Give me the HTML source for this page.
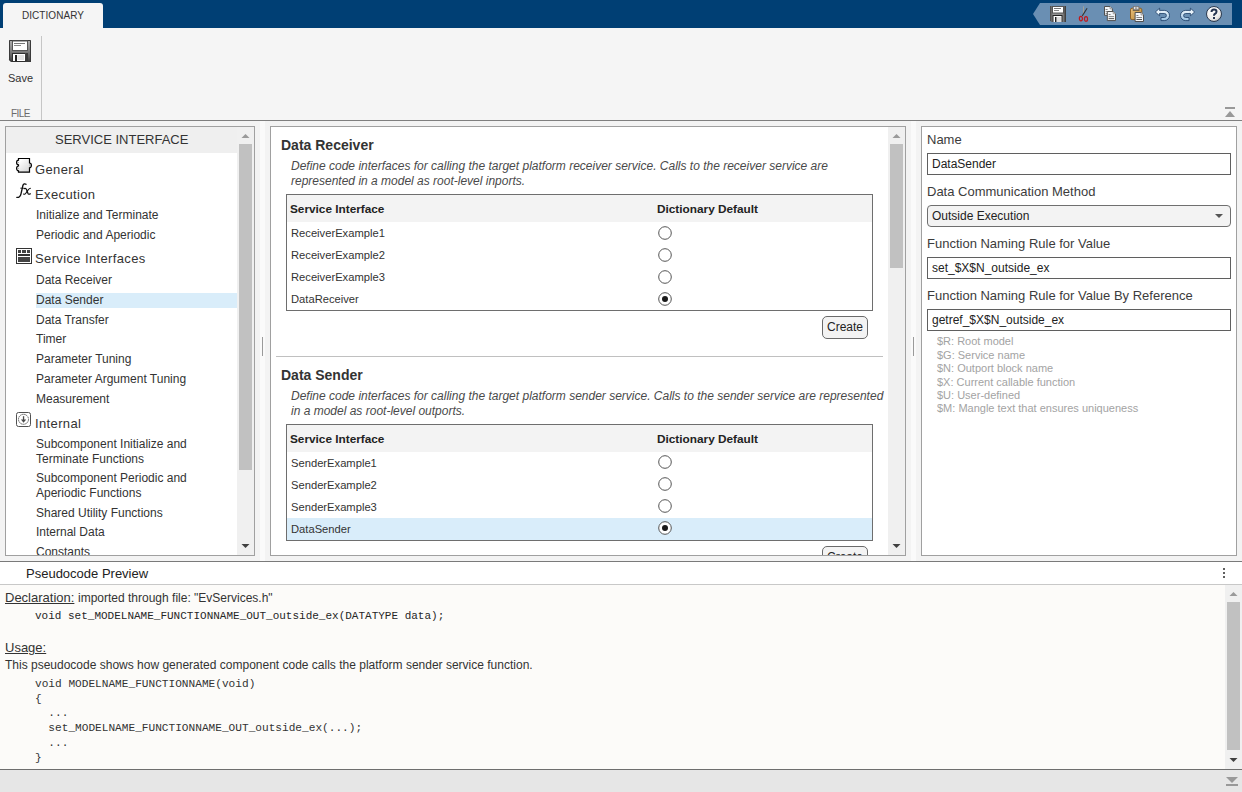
<!DOCTYPE html>
<html><head><meta charset="utf-8">
<style>
*{box-sizing:border-box;margin:0;padding:0}
html,body{width:1242px;height:792px;overflow:hidden;background:#f3f3f3;font-family:"Liberation Sans",sans-serif;color:#333}
.t{position:absolute;white-space:pre}
.r{position:absolute}
svg{position:absolute;overflow:visible}
</style></head><body>
<div class="r" style="left:0px;top:0px;width:1242px;height:28px;background:#003f74;"></div>
<div class="r" style="left:3px;top:3px;width:100px;height:25px;background:#f5f5f5;border-radius:3px 3px 0 0"></div>
<div class="t" style="left:22px;top:11px;font-size:10px;line-height:10px;color:#333;font-weight:normal;font-style:normal;font-family:'Liberation Sans';letter-spacing:0.05px">DICTIONARY</div>
<svg style="left:0;top:0" width="1242" height="28"><polygon points="1033,14 1040,3 1232,3 1232,25 1040,25" fill="#6a8fb3"/></svg>
<div class="r" style="left:0px;top:28px;width:1242px;height:92px;background:#f5f5f5;"></div>
<div class="r" style="left:0px;top:120px;width:1242px;height:1px;background:#7f7f7f;"></div>
<div class="r" style="left:41px;top:36px;width:1px;height:84px;background:#c6c6c6;"></div>
<div class="t" style="left:8px;top:73px;font-size:11px;line-height:11px;color:#333;font-weight:normal;font-style:normal;font-family:'Liberation Sans';">Save</div>
<div class="t" style="left:11px;top:109px;font-size:10px;line-height:10px;color:#6a6a6a;font-weight:normal;font-style:normal;font-family:'Liberation Sans';letter-spacing:-0.55px">FILE</div>
<svg style="left:9px;top:40px" width="22" height="22" viewBox="0 0 22 22">
<defs><linearGradient id="fg" x1="0" y1="0" x2="0" y2="1"><stop offset="0" stop-color="#b0b0b0"/><stop offset="0.5" stop-color="#808080"/><stop offset="1" stop-color="#3c3c3c"/></linearGradient></defs>
<path d="M0,0 H22 V22 H2 L0,20 Z" fill="url(#fg)"/>
<path d="M0.5,0.5 H21.5 V21.5 H2.2 L0.5,19.8 Z" fill="none" stroke="#3a3a3a" stroke-width="1"/>
<rect x="3.5" y="1" width="15" height="9.5" fill="#fff" stroke="#555" stroke-width="1"/>
<rect x="5" y="3" width="11" height="1" fill="#777"/>
<rect x="5" y="5" width="7" height="1" fill="#888"/>
<rect x="3" y="13" width="13.5" height="9" fill="#2f2f2f"/>
<rect x="4" y="14" width="12" height="7" fill="#fff"/>
<rect x="6" y="15" width="2" height="6" fill="#222"/>
<rect x="8.5" y="15" width="6.5" height="5" fill="#e2e2e2"/>
<rect x="16.5" y="13" width="2.5" height="8.5" fill="#3a3a3a"/>
</svg>
<div class="r" style="left:1225px;top:107px;width:10px;height:2px;background:#999;"></div>
<svg style="left:0;top:0" width="1242" height="130"><polygon points="1225,117 1230,111 1235,117" fill="#999"/></svg>
<svg style="left:1050px;top:6px" width="16" height="16" viewBox="0 0 16 16">
<defs><linearGradient id="qg" x1="0" y1="0" x2="1" y2="0"><stop offset="0" stop-color="#444"/><stop offset="0.2" stop-color="#999"/><stop offset="0.8" stop-color="#888"/><stop offset="1" stop-color="#333"/></linearGradient></defs>
<path d="M0,0 H16 V16 H1.5 L0,14.5 Z" fill="url(#qg)"/>
<rect x="2.5" y="0.5" width="11" height="6.5" fill="#fff" stroke="#555" stroke-width="1"/>
<rect x="4" y="2" width="7" height="1" fill="#777"/><rect x="4" y="4" width="5" height="1" fill="#888"/>
<rect x="2.5" y="9" width="10" height="7" fill="#222"/>
<rect x="3.5" y="10" width="8" height="6" fill="#fff"/>
<rect x="5" y="11" width="1.5" height="5" fill="#222"/>
<rect x="7" y="11" width="4" height="5" fill="#ddd"/>
</svg>
<svg style="left:1078px;top:6px" width="12" height="17" viewBox="0 0 12 17">
<path d="M5.5,0.3 V8.6 L4.6,10" fill="none" stroke="#a8a293" stroke-width="0.9"/>
<line x1="9.1" y1="2.2" x2="4.3" y2="9.9" stroke="#333" stroke-width="1.1"/>
<ellipse cx="2.9" cy="12.6" rx="1.55" ry="2.25" fill="none" stroke="#c0181c" stroke-width="1.2"/>
<ellipse cx="8" cy="12.9" rx="1.55" ry="2.35" fill="none" stroke="#c0181c" stroke-width="1.2"/>
</svg>
<svg style="left:1104px;top:6px" width="13" height="16" viewBox="0 0 13 16">
<path d="M0.5,0.5 H6 L8.4,2.9 V9.3 H0.5 Z" fill="#f4f6f8" stroke="#505050" stroke-width="1"/>
<path d="M6,0.5 V2.9 H8.4" fill="#ddd" stroke="#777" stroke-width="0.6"/>
<rect x="1.6" y="3" width="2" height="0.9" fill="#777"/><rect x="1.6" y="5" width="5" height="0.9" fill="#888"/><rect x="1.6" y="7" width="5" height="0.9" fill="#888"/>
<path d="M3.3,5.5 H9.2 L11.5,7.8 V14.6 H3.3 Z" fill="#f4f6f8" stroke="#505050" stroke-width="1"/>
<path d="M9.2,5.5 V7.8 H11.5" fill="#ddd" stroke="#777" stroke-width="0.6"/>
<rect x="4.6" y="8.1" width="2" height="0.9" fill="#777"/><rect x="4.6" y="10.2" width="5.5" height="0.9" fill="#777"/><rect x="4.6" y="12.2" width="5.5" height="0.9" fill="#444"/>
</svg>
<svg style="left:1130px;top:6px" width="15" height="16" viewBox="0 0 15 16">
<defs><linearGradient id="pg" x1="0" y1="0" x2="1" y2="1"><stop offset="0" stop-color="#e9c27e"/><stop offset="1" stop-color="#b98536"/></linearGradient></defs>
<rect x="0.5" y="2.2" width="11.3" height="11.4" rx="1.6" fill="url(#pg)" stroke="#8a5a1c" stroke-width="0.9"/>
<rect x="2.8" y="3.4" width="6.6" height="1.2" fill="#333"/>
<rect x="3.4" y="0.5" width="5.4" height="3.2" fill="#ececec" stroke="#777" stroke-width="0.8"/>
<rect x="4.9" y="1.6" width="2.4" height="0.9" fill="#555"/>
<path d="M5.1,6.5 H11 L13.5,9 V15.5 H5.1 Z" fill="#f4f6f8" stroke="#505050" stroke-width="1"/>
<path d="M11,6.5 V9 H13.5" fill="#ddd" stroke="#777" stroke-width="0.6"/>
<rect x="6.4" y="9.1" width="2" height="0.9" fill="#777"/><rect x="6.4" y="11.1" width="5.6" height="0.9" fill="#777"/><rect x="6.4" y="13.1" width="5.6" height="0.9" fill="#444"/>
</svg>
<svg style="left:1155px;top:8px" width="15" height="13" viewBox="0 0 15 13"><defs><linearGradient id="ug" x1="0" y1="0" x2="0" y2="1"><stop offset="0" stop-color="#eef6fc"/><stop offset="1" stop-color="#98c0e2"/></linearGradient></defs>
<path d="M4,2.4 H9.4 A5.1,5.1 0 0 1 9.4,12.6 H6 V9.5 H9.4 A2,2 0 0 0 9.4,5.5 H4 Z" fill="url(#ug)" stroke="#1d3d66" stroke-width="0.8" stroke-linejoin="round"/>
<polygon points="0.4,4 4.6,0.2 4.6,7.8" fill="#e8f3fb" stroke="#1d3d66" stroke-width="0.8" stroke-linejoin="round"/>
<rect x="4" y="2.8" width="1.2" height="2.3" fill="#e8f3fb"/></svg>
<svg style="left:1180px;top:8px" width="15" height="13" viewBox="0 0 15 13"><g transform="translate(15,0) scale(-1,1)"><defs><linearGradient id="ug2" x1="0" y1="0" x2="0" y2="1"><stop offset="0" stop-color="#eef6fc"/><stop offset="1" stop-color="#98c0e2"/></linearGradient></defs>
<path d="M4,2.4 H9.4 A5.1,5.1 0 0 1 9.4,12.6 H6 V9.5 H9.4 A2,2 0 0 0 9.4,5.5 H4 Z" fill="url(#ug2)" stroke="#1d3d66" stroke-width="0.8" stroke-linejoin="round"/>
<polygon points="0.4,4 4.6,0.2 4.6,7.8" fill="#e8f3fb" stroke="#1d3d66" stroke-width="0.8" stroke-linejoin="round"/>
<rect x="4" y="2.8" width="1.2" height="2.3" fill="#e8f3fb"/></g></svg>
<svg style="left:1206px;top:6px" width="16" height="16" viewBox="0 0 16 16">
<defs><radialGradient id="hg" cx="0.4" cy="0.3" r="0.8"><stop offset="0" stop-color="#fff"/><stop offset="0.7" stop-color="#e8e8e8"/><stop offset="1" stop-color="#999"/></radialGradient></defs>
<circle cx="8" cy="8" r="7.5" fill="url(#hg)" stroke="#2a3a50" stroke-width="1"/>
<path d="M5.5,6 Q5.5,3.5 8,3.5 Q10.5,3.5 10.5,5.8 Q10.5,7.2 8.8,8 Q8,8.4 8,9.8" fill="none" stroke="#233350" stroke-width="2"/>
<rect x="7" y="11" width="2" height="2" fill="#233350"/>
</svg>
<div class="r" style="left:5px;top:126px;width:250px;height:430px;background:#fff;border:1px solid #a0a0a0"></div>
<div class="r" style="left:270px;top:126px;width:636px;height:430px;background:#fff;border:1px solid #a0a0a0"></div>
<div class="r" style="left:921px;top:126px;width:316px;height:430px;background:#fff;border:1px solid #a0a0a0"></div>
<div class="r" style="left:260px;top:121px;width:5px;height:440px;background:#fafafa;"></div>
<div class="r" style="left:911px;top:121px;width:5px;height:440px;background:#fafafa;"></div>
<div class="r" style="left:262px;top:337px;width:1px;height:19px;background:#9a9a9a;"></div>
<div class="r" style="left:913px;top:337px;width:1px;height:19px;background:#9a9a9a;"></div>
<div class="r" style="left:6px;top:127px;width:231px;height:26px;background:#efefef;"></div>
<div class="r" style="left:237px;top:127px;width:17px;height:428px;background:#f0f0f0;"></div>
<div class="r" style="left:239px;top:144px;width:13px;height:326px;background:#c1c1c1;"></div>
<svg style="left:0;top:0" width="1242" height="792"><polygon points="241.5,138 245.5,134 249.5,138" fill="#9a9a9a"/><polygon points="241.5,544 245.5,548 249.5,544" fill="#404040"/></svg>
<div class="t" style="left:55px;top:133px;font-size:13px;line-height:13px;color:#333;font-weight:normal;font-style:normal;font-family:'Liberation Sans';">SERVICE INTERFACE</div>
<div class="r" style="left:36px;top:293px;width:201px;height:15px;background:#d9edfa;"></div>
<div class="t" style="left:35px;top:163px;font-size:13px;line-height:13px;color:#333;font-weight:normal;font-style:normal;font-family:'Liberation Sans';letter-spacing:0.37px">General</div>
<div class="t" style="left:35px;top:188px;font-size:13px;line-height:13px;color:#333;font-weight:normal;font-style:normal;font-family:'Liberation Sans';letter-spacing:0.37px">Execution</div>
<div class="t" style="left:36px;top:209px;font-size:12px;line-height:12px;color:#333;font-weight:normal;font-style:normal;font-family:'Liberation Sans';">Initialize and Terminate</div>
<div class="t" style="left:36px;top:229px;font-size:12px;line-height:12px;color:#333;font-weight:normal;font-style:normal;font-family:'Liberation Sans';">Periodic and Aperiodic</div>
<div class="t" style="left:35px;top:252px;font-size:13px;line-height:13px;color:#333;font-weight:normal;font-style:normal;font-family:'Liberation Sans';letter-spacing:0.37px">Service Interfaces</div>
<div class="t" style="left:36px;top:274px;font-size:12px;line-height:12px;color:#333;font-weight:normal;font-style:normal;font-family:'Liberation Sans';">Data Receiver</div>
<div class="t" style="left:36px;top:294px;font-size:12px;line-height:12px;color:#333;font-weight:normal;font-style:normal;font-family:'Liberation Sans';">Data Sender</div>
<div class="t" style="left:36px;top:314px;font-size:12px;line-height:12px;color:#333;font-weight:normal;font-style:normal;font-family:'Liberation Sans';">Data Transfer</div>
<div class="t" style="left:36px;top:333px;font-size:12px;line-height:12px;color:#333;font-weight:normal;font-style:normal;font-family:'Liberation Sans';">Timer</div>
<div class="t" style="left:36px;top:353px;font-size:12px;line-height:12px;color:#333;font-weight:normal;font-style:normal;font-family:'Liberation Sans';">Parameter Tuning</div>
<div class="t" style="left:36px;top:373px;font-size:12px;line-height:12px;color:#333;font-weight:normal;font-style:normal;font-family:'Liberation Sans';">Parameter Argument Tuning</div>
<div class="t" style="left:36px;top:393px;font-size:12px;line-height:12px;color:#333;font-weight:normal;font-style:normal;font-family:'Liberation Sans';">Measurement</div>
<div class="t" style="left:35px;top:417px;font-size:13px;line-height:13px;color:#333;font-weight:normal;font-style:normal;font-family:'Liberation Sans';letter-spacing:0.37px">Internal</div>
<div class="t" style="left:36px;top:438px;font-size:12px;line-height:12px;color:#333;font-weight:normal;font-style:normal;font-family:'Liberation Sans';">Subcomponent Initialize and</div>
<div class="t" style="left:36px;top:453px;font-size:12px;line-height:12px;color:#333;font-weight:normal;font-style:normal;font-family:'Liberation Sans';">Terminate Functions</div>
<div class="t" style="left:36px;top:472px;font-size:12px;line-height:12px;color:#333;font-weight:normal;font-style:normal;font-family:'Liberation Sans';">Subcomponent Periodic and</div>
<div class="t" style="left:36px;top:487px;font-size:12px;line-height:12px;color:#333;font-weight:normal;font-style:normal;font-family:'Liberation Sans';">Aperiodic Functions</div>
<div class="t" style="left:36px;top:507px;font-size:12px;line-height:12px;color:#333;font-weight:normal;font-style:normal;font-family:'Liberation Sans';">Shared Utility Functions</div>
<div class="t" style="left:36px;top:526px;font-size:12px;line-height:12px;color:#333;font-weight:normal;font-style:normal;font-family:'Liberation Sans';">Internal Data</div>
<div class="r" style="left:6px;top:540px;width:231px;height:15px;overflow:hidden"><div class="t" style="left:30px;top:6px;font-size:12px;line-height:12px;color:#333;font-weight:normal;font-style:normal;font-family:'Liberation Sans';">Constants</div>
</div>
<svg style="left:14px;top:155px" width="20" height="20" viewBox="0 0 20 20">
<defs><linearGradient id="gg" x1="0" y1="0" x2="1" y2="1"><stop offset="0.2" stop-color="#fff"/><stop offset="1" stop-color="#d0d0d0"/></linearGradient></defs>
<path d="M4.5,3.5 H15.5 V8 A1.9,2.4 0 0 1 15.5,12.8 V17.2 H4.5 V15.8 A1.9,2.4 0 0 1 4.5,11 V9.9 A1.9,2.4 0 0 1 4.5,5.1 Z" fill="url(#gg)" stroke="#000" stroke-width="1.2"/>
<path d="M3.5,6.9 L4.6,7.5 L3.5,8.1 M3.5,12.8 L4.6,13.4 L3.5,14 M15.4,9.8 L16.5,10.4 L15.4,11" fill="none" stroke="#888" stroke-width="0.7"/>
</svg>
<svg style="left:14px;top:180px" width="20" height="20" viewBox="0 0 20 20">
<path d="M12,4.3 C11,3.4 9.4,3.7 8.8,5.8 L7,13.8 C6.4,16.6 5,17.6 2.8,17.4" fill="none" stroke="#111" stroke-width="1.35" stroke-linecap="round"/>
<path d="M6.3,8.2 H9.8" fill="none" stroke="#111" stroke-width="0.9"/>
<path d="M10.2,8.6 Q11.8,7.6 12.8,10.3 L13.9,13.2 Q14.6,14.9 16.4,13.8" fill="none" stroke="#111" stroke-width="1.25" stroke-linecap="round"/>
<path d="M16.4,8.2 Q15.2,8.3 13.6,10.6 L12,13 Q10.8,14.8 9.6,14" fill="none" stroke="#111" stroke-width="1.1" stroke-linecap="round"/>
</svg>
<svg style="left:16px;top:248px" width="16" height="16" viewBox="0 0 16 16">
<rect x="0.5" y="0.5" width="15" height="15" fill="#fff" stroke="#333" stroke-width="1"/>
<rect x="2" y="2" width="3" height="3" fill="#444"/><rect x="6" y="2" width="4" height="3" fill="#444"/><rect x="11" y="2" width="3" height="3" fill="#444"/>
<rect x="2" y="6" width="12" height="2" fill="#333"/>
<rect x="2" y="9" width="12" height="5" fill="#444"/>
</svg>
<svg style="left:16px;top:412px" width="15" height="15" viewBox="0 0 15 15">
<rect x="0.5" y="0.5" width="14" height="14" rx="2" fill="#fff" stroke="#505050" stroke-width="1"/>
<circle cx="7.5" cy="7.3" r="5" fill="none" stroke="#5a5a5a" stroke-width="0.95" stroke-dasharray="1.6 0.55"/>
<rect x="6.9" y="4.2" width="1.3" height="4" fill="#4a4a4a"/>
<polygon points="4.9,7.4 10.2,7.4 7.55,10.8" fill="#4a4a4a"/>
</svg>
<div class="r" style="left:888px;top:127px;width:17px;height:428px;background:#f0f0f0;"></div>
<div class="r" style="left:890px;top:144px;width:13px;height:124px;background:#c1c1c1;"></div>
<svg style="left:0;top:0" width="1242" height="792"><polygon points="892.5,138 896.5,134 900.5,138" fill="#9a9a9a"/><polygon points="892.5,544 896.5,548 900.5,544" fill="#404040"/></svg>
<div class="t" style="left:281px;top:138px;font-size:14px;line-height:14px;color:#333;font-weight:bold;font-style:normal;font-family:'Liberation Sans';">Data Receiver</div>
<div class="t" style="left:291px;top:160px;font-size:12px;line-height:12px;color:#4a4a4a;font-weight:normal;font-style:italic;font-family:'Liberation Sans';">Define code interfaces for calling the target platform receiver service. Calls to the receiver service are</div>
<div class="t" style="left:291px;top:175px;font-size:12px;line-height:12px;color:#4a4a4a;font-weight:normal;font-style:italic;font-family:'Liberation Sans';">represented in a model as root-level inports.</div>
<div class="r" style="left:286px;top:194px;width:587px;height:117px;background:#fff;border:1px solid #6e6e6e"></div>
<div class="r" style="left:287px;top:195px;width:585px;height:27px;background:#f3f3f3;"></div>
<div class="t" style="left:290px;top:204px;font-size:11.8px;line-height:11.8px;color:#222;font-weight:bold;font-style:normal;font-family:'Liberation Sans';">Service Interface</div>
<div class="t" style="left:657px;top:204px;font-size:11.8px;line-height:11.8px;color:#222;font-weight:bold;font-style:normal;font-family:'Liberation Sans';">Dictionary Default</div>
<div class="t" style="left:291px;top:228px;font-size:11.2px;line-height:11.2px;color:#333;font-weight:normal;font-style:normal;font-family:'Liberation Sans';">ReceiverExample1</div>
<svg style="left:658px;top:226px" width="14" height="14" viewBox="0 0 14 14"><circle cx="7" cy="7" r="6.3" fill="#fff" stroke="#555" stroke-width="1"/></svg>
<div class="t" style="left:291px;top:250px;font-size:11.2px;line-height:11.2px;color:#333;font-weight:normal;font-style:normal;font-family:'Liberation Sans';">ReceiverExample2</div>
<svg style="left:658px;top:248px" width="14" height="14" viewBox="0 0 14 14"><circle cx="7" cy="7" r="6.3" fill="#fff" stroke="#555" stroke-width="1"/></svg>
<div class="t" style="left:291px;top:272px;font-size:11.2px;line-height:11.2px;color:#333;font-weight:normal;font-style:normal;font-family:'Liberation Sans';">ReceiverExample3</div>
<svg style="left:658px;top:270px" width="14" height="14" viewBox="0 0 14 14"><circle cx="7" cy="7" r="6.3" fill="#fff" stroke="#555" stroke-width="1"/></svg>
<div class="t" style="left:291px;top:294px;font-size:11.2px;line-height:11.2px;color:#333;font-weight:normal;font-style:normal;font-family:'Liberation Sans';">DataReceiver</div>
<svg style="left:658px;top:292px" width="14" height="14" viewBox="0 0 14 14"><circle cx="7" cy="7" r="6.3" fill="#fff" stroke="#555" stroke-width="1"/><circle cx="7" cy="7" r="3" fill="#1a1a1a"/></svg>
<div class="r" style="left:276px;top:356px;width:607px;height:1px;background:#c0c0c0;"></div>
<div class="t" style="left:281px;top:368px;font-size:14px;line-height:14px;color:#333;font-weight:bold;font-style:normal;font-family:'Liberation Sans';">Data Sender</div>
<div class="t" style="left:291px;top:390px;font-size:12px;line-height:12px;color:#4a4a4a;font-weight:normal;font-style:italic;font-family:'Liberation Sans';">Define code interfaces for calling the target platform sender service. Calls to the sender service are represented</div>
<div class="t" style="left:291px;top:405px;font-size:12px;line-height:12px;color:#4a4a4a;font-weight:normal;font-style:italic;font-family:'Liberation Sans';">in a model as root-level outports.</div>
<div class="r" style="left:286px;top:424px;width:587px;height:117px;background:#fff;border:1px solid #6e6e6e"></div>
<div class="r" style="left:287px;top:425px;width:585px;height:27px;background:#f3f3f3;"></div>
<div class="r" style="left:287px;top:518px;width:585px;height:22px;background:#d9edfa;"></div>
<div class="t" style="left:290px;top:434px;font-size:11.8px;line-height:11.8px;color:#222;font-weight:bold;font-style:normal;font-family:'Liberation Sans';">Service Interface</div>
<div class="t" style="left:657px;top:434px;font-size:11.8px;line-height:11.8px;color:#222;font-weight:bold;font-style:normal;font-family:'Liberation Sans';">Dictionary Default</div>
<div class="t" style="left:291px;top:458px;font-size:11.2px;line-height:11.2px;color:#333;font-weight:normal;font-style:normal;font-family:'Liberation Sans';">SenderExample1</div>
<svg style="left:658px;top:455px" width="14" height="14" viewBox="0 0 14 14"><circle cx="7" cy="7" r="6.3" fill="#fff" stroke="#555" stroke-width="1"/></svg>
<div class="t" style="left:291px;top:480px;font-size:11.2px;line-height:11.2px;color:#333;font-weight:normal;font-style:normal;font-family:'Liberation Sans';">SenderExample2</div>
<svg style="left:658px;top:477px" width="14" height="14" viewBox="0 0 14 14"><circle cx="7" cy="7" r="6.3" fill="#fff" stroke="#555" stroke-width="1"/></svg>
<div class="t" style="left:291px;top:502px;font-size:11.2px;line-height:11.2px;color:#333;font-weight:normal;font-style:normal;font-family:'Liberation Sans';">SenderExample3</div>
<svg style="left:658px;top:499px" width="14" height="14" viewBox="0 0 14 14"><circle cx="7" cy="7" r="6.3" fill="#fff" stroke="#555" stroke-width="1"/></svg>
<div class="t" style="left:291px;top:524px;font-size:11.2px;line-height:11.2px;color:#333;font-weight:normal;font-style:normal;font-family:'Liberation Sans';">DataSender</div>
<svg style="left:658px;top:521px" width="14" height="14" viewBox="0 0 14 14"><circle cx="7" cy="7" r="6.3" fill="#fff" stroke="#555" stroke-width="1"/><circle cx="7" cy="7" r="3" fill="#1a1a1a"/></svg>
<div class="r" style="left:822px;top:316px;width:46px;height:23px;background:#f3f3f3;border:1px solid #6a6a6a;border-radius:5px"></div>
<div class="t" style="left:827px;top:321px;font-size:12px;line-height:12px;color:#222;font-weight:normal;font-style:normal;font-family:'Liberation Sans';">Create</div>
<div class="r" style="left:271px;top:540px;width:617px;height:15px;overflow:hidden"><div class="r" style="left:551px;top:6px;width:46px;height:23px;background:#f3f3f3;border:1px solid #6a6a6a;border-radius:5px"></div>
<div class="t" style="left:556px;top:11px;font-size:12px;line-height:12px;color:#222;font-weight:normal;font-style:normal;font-family:'Liberation Sans';">Create</div>
</div>
<div class="t" style="left:927px;top:133px;font-size:13px;line-height:13px;color:#3c3c3c;font-weight:normal;font-style:normal;font-family:'Liberation Sans';">Name</div>
<div class="r" style="left:927px;top:153px;width:304px;height:22px;background:#fff;border:1px solid #5f5f5f"></div>
<div class="t" style="left:932px;top:158px;font-size:12px;line-height:12px;color:#222;font-weight:normal;font-style:normal;font-family:'Liberation Sans';">DataSender</div>
<div class="t" style="left:927px;top:185px;font-size:13px;line-height:13px;color:#3c3c3c;font-weight:normal;font-style:normal;font-family:'Liberation Sans';">Data Communication Method</div>
<div class="r" style="left:927px;top:205px;width:304px;height:22px;background:#f3f3f3;border:1px solid #6f6f6f;border-radius:4px"></div>
<div class="t" style="left:932px;top:210px;font-size:12px;line-height:12px;color:#222;font-weight:normal;font-style:normal;font-family:'Liberation Sans';">Outside Execution</div>
<svg style="left:0;top:0" width="1242" height="300"><polygon points="1215,214 1223,214 1219,218" fill="#555"/></svg>
<div class="t" style="left:927px;top:237px;font-size:13px;line-height:13px;color:#3c3c3c;font-weight:normal;font-style:normal;font-family:'Liberation Sans';">Function Naming Rule for Value</div>
<div class="r" style="left:927px;top:257px;width:304px;height:22px;background:#fff;border:1px solid #5f5f5f"></div>
<div class="t" style="left:932px;top:262px;font-size:12px;line-height:12px;color:#222;font-weight:normal;font-style:normal;font-family:'Liberation Sans';">set_$X$N_outside_ex</div>
<div class="t" style="left:927px;top:289px;font-size:13px;line-height:13px;color:#3c3c3c;font-weight:normal;font-style:normal;font-family:'Liberation Sans';">Function Naming Rule for Value By Reference</div>
<div class="r" style="left:927px;top:309px;width:304px;height:22px;background:#fff;border:1px solid #5f5f5f"></div>
<div class="t" style="left:932px;top:314px;font-size:12px;line-height:12px;color:#222;font-weight:normal;font-style:normal;font-family:'Liberation Sans';">getref_$X$N_outside_ex</div>
<div class="t" style="left:937px;top:336px;font-size:11px;line-height:11px;color:#a3a3a3;font-weight:normal;font-style:normal;font-family:'Liberation Sans';">$R: Root model</div>
<div class="t" style="left:937px;top:350px;font-size:11px;line-height:11px;color:#a3a3a3;font-weight:normal;font-style:normal;font-family:'Liberation Sans';">$G: Service name</div>
<div class="t" style="left:937px;top:363px;font-size:11px;line-height:11px;color:#a3a3a3;font-weight:normal;font-style:normal;font-family:'Liberation Sans';">$N: Outport block name</div>
<div class="t" style="left:937px;top:377px;font-size:11px;line-height:11px;color:#a3a3a3;font-weight:normal;font-style:normal;font-family:'Liberation Sans';">$X: Current callable function</div>
<div class="t" style="left:937px;top:390px;font-size:11px;line-height:11px;color:#a3a3a3;font-weight:normal;font-style:normal;font-family:'Liberation Sans';">$U: User-defined</div>
<div class="t" style="left:937px;top:403px;font-size:11px;line-height:11px;color:#a3a3a3;font-weight:normal;font-style:normal;font-family:'Liberation Sans';">$M: Mangle text that ensures uniqueness</div>
<div class="r" style="left:0px;top:561px;width:1242px;height:1px;background:#7a7a7a;"></div>
<div class="r" style="left:0px;top:562px;width:1242px;height:22px;background:#fff;"></div>
<div class="r" style="left:0px;top:584px;width:1242px;height:1px;background:#c8c8c8;"></div>
<div class="r" style="left:0px;top:585px;width:1242px;height:184px;background:#fcfbf9;"></div>
<div class="r" style="left:0px;top:769px;width:1242px;height:1px;background:#6e6e6e;"></div>
<div class="r" style="left:0px;top:770px;width:1242px;height:22px;background:#e6e6e6;"></div>
<div class="t" style="left:26px;top:567px;font-size:13px;line-height:13px;color:#222;font-weight:normal;font-style:normal;font-family:'Liberation Sans';">Pseudocode Preview</div>
<div class="r" style="left:1223px;top:568px;width:2px;height:2px;background:#606060;"></div>
<div class="r" style="left:1223px;top:572px;width:2px;height:2px;background:#606060;"></div>
<div class="r" style="left:1223px;top:576px;width:2px;height:2px;background:#606060;"></div>
<div class="r" style="left:1225px;top:585px;width:17px;height:184px;background:#f0f0f0;"></div>
<div class="r" style="left:1227px;top:602px;width:13px;height:148px;background:#c1c1c1;"></div>
<svg style="left:0;top:0" width="1242" height="792"><polygon points="1229.5,596 1233.5,592 1237.5,596" fill="#9a9a9a"/><polygon points="1229.5,758 1233.5,762 1237.5,758" fill="#404040"/></svg>
<div class="t" style="left:5px;top:591px;font-size:13px;line-height:13px;color:#333;font-weight:normal;font-style:normal;font-family:'Liberation Sans';"><span style="text-decoration:underline">Declaration:</span></div>
<div class="t" style="left:78px;top:592px;font-size:12px;line-height:12px;color:#333;font-weight:normal;font-style:normal;font-family:'Liberation Sans';">imported through file: "EvServices.h"</div>
<div class="t" style="left:35px;top:611px;font-size:11px;line-height:11px;color:#262626;font-weight:normal;font-style:normal;font-family:'Liberation Mono';">void set_MODELNAME_FUNCTIONNAME_OUT_outside_ex(DATATYPE data);</div>
<div class="t" style="left:5px;top:641px;font-size:13px;line-height:13px;color:#333;font-weight:normal;font-style:normal;font-family:'Liberation Sans';"><span style="text-decoration:underline">Usage:</span></div>
<div class="t" style="left:5px;top:659px;font-size:12px;line-height:12px;color:#333;font-weight:normal;font-style:normal;font-family:'Liberation Sans';">This pseudocode shows how generated component code calls the platform sender service function.</div>
<div class="t" style="left:35px;top:679px;font-size:11.13px;line-height:11.13px;color:#333;font-weight:normal;font-style:normal;font-family:'Liberation Mono';">void MODELNAME_FUNCTIONNAME(void)</div>
<div class="t" style="left:35px;top:694px;font-size:11.13px;line-height:11.13px;color:#333;font-weight:normal;font-style:normal;font-family:'Liberation Mono';">{</div>
<div class="t" style="left:35px;top:708px;font-size:11.13px;line-height:11.13px;color:#333;font-weight:normal;font-style:normal;font-family:'Liberation Mono';">  ...</div>
<div class="t" style="left:35px;top:723px;font-size:11.13px;line-height:11.13px;color:#333;font-weight:normal;font-style:normal;font-family:'Liberation Mono';">  set_MODELNAME_FUNCTIONNAME_OUT_outside_ex(...);</div>
<div class="t" style="left:35px;top:738px;font-size:11.13px;line-height:11.13px;color:#333;font-weight:normal;font-style:normal;font-family:'Liberation Mono';">  ...</div>
<div class="t" style="left:35px;top:753px;font-size:11.13px;line-height:11.13px;color:#333;font-weight:normal;font-style:normal;font-family:'Liberation Mono';">}</div>
<svg style="left:0;top:0" width="1242" height="792"><polygon points="1226,777 1238,777 1232,783" fill="#999"/></svg>
<div class="r" style="left:1226px;top:784px;width:12px;height:2px;background:#999;"></div>
</body></html>
